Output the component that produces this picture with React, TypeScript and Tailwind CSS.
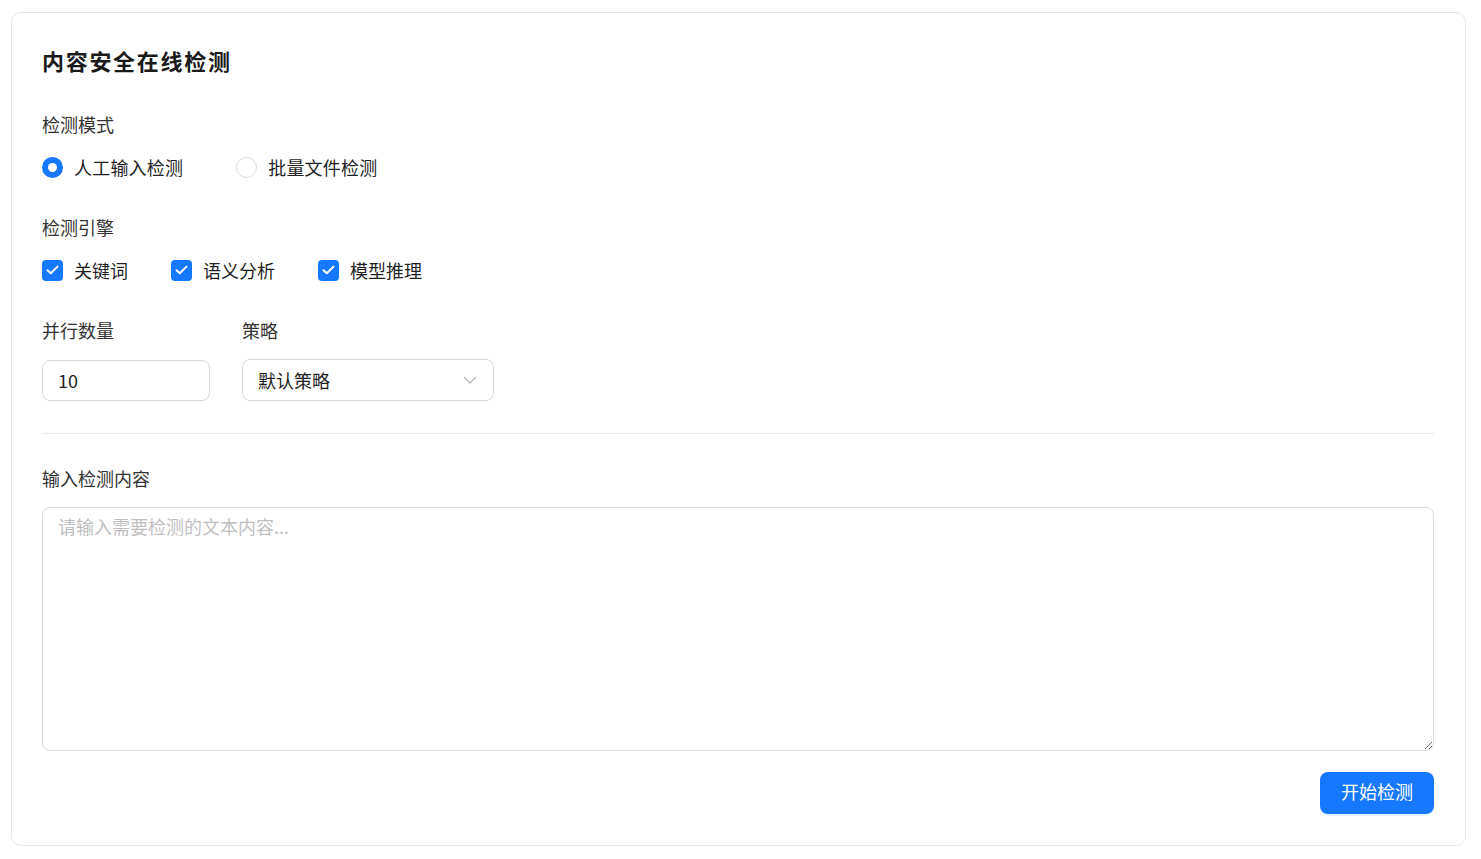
import React, { useState } from "react";

const font = { fontFamily: '"Noto Sans CJK SC", "Noto Sans", sans-serif' };

function Radio({ checked, label, onClick }: { checked: boolean; label: string; onClick: () => void }) {
  return (
    <button type="button" onClick={onClick} className="flex items-center gap-[11px] cursor-pointer">
      {checked ? (
        <span className="w-[21px] h-[21px] rounded-full bg-[#1677ff] flex items-center justify-center">
          <span className="w-[9px] h-[9px] rounded-full bg-white" />
        </span>
      ) : (
        <span className="w-[21px] h-[21px] rounded-full border border-[#d9d9d9] bg-white" />
      )}
      <span className="text-[18px] leading-[26px] text-[#1f1f1f] tracking-[0.2px]">{label}</span>
    </button>
  );
}

function Check({ label }: { label: string }) {
  return (
    <div className="flex items-center gap-[11px]">
      <span className="w-[21px] h-[21px] rounded-[4px] bg-[#1677ff] flex items-center justify-center">
        <svg width="13" height="10" viewBox="0 0 13 10" fill="none">
          <path d="M1.5 5.2 L4.8 8.3 L11.5 1.6" stroke="white" strokeWidth="2" strokeLinecap="round" strokeLinejoin="round" />
        </svg>
      </span>
      <span className="text-[18px] leading-[26px] text-[#1f1f1f]">{label}</span>
    </div>
  );
}

export default function App() {
  const [mode, setMode] = useState(0);
  return (
    <div className="bg-white min-h-[859px] pt-[12px] pl-[11px] pr-[15px] pb-[13px]" style={font}>
      <div className="border border-[#e6e6e6] rounded-[10px] bg-white pl-[30px] pr-[31px] pt-[31px] pb-[31px] h-[834px] flex flex-col">
        <h1 className="text-[22px] leading-[32px] font-bold text-[#1a1a1a] tracking-[1.7px]">内容安全在线检测</h1>

        <div className="mt-[35px] text-[18px] leading-[26px] text-[#333333]">检测模式</div>
        <div className="mt-[17px] flex items-center gap-[53px]">
          <Radio checked={mode === 0} label="人工输入检测" onClick={() => setMode(0)} />
          <Radio checked={mode === 1} label="批量文件检测" onClick={() => setMode(1)} />
        </div>

        <div className="mt-[34px] text-[18px] leading-[26px] text-[#333333]">检测引擎</div>
        <div className="mt-[17px] flex items-center gap-[43px]">
          <Check label="关键词" />
          <Check label="语义分析" />
          <Check label="模型推理" />
        </div>

        <div className="mt-[34px] flex gap-[32px]">
          <div className="flex flex-col w-[168px]">
            <div className="text-[18px] leading-[26px] text-[#333333]">并行数量</div>
            <div className="mt-[17px] h-[41px] border border-[#d9d9d9] rounded-[8px] flex items-center px-[15px] text-[18px] text-[#1f1f1f]">10</div>
          </div>
          <div className="flex flex-col w-[252px]">
            <div className="text-[18px] leading-[26px] text-[#333333]">策略</div>
            <div className="mt-[16px] h-[42px] border border-[#d9d9d9] rounded-[8px] flex items-center justify-between pl-[15px] pr-[16px] text-[18px] text-[#1f1f1f]">
              <span>默认策略</span>
              <svg width="14" height="8" viewBox="0 0 14 8" fill="none">
                <path d="M1 1 L7 7 L13 1" stroke="#b3b3b3" strokeWidth="1.2" />
              </svg>
            </div>
          </div>
        </div>

        <div className="mt-[32px] h-px bg-[#ebebeb]" />

        <div className="mt-[31px] text-[18px] leading-[26px] text-[#333333]">输入检测内容</div>
        <textarea
          className="mt-[16px] h-[244px] w-full border border-[#d9d9d9] rounded-[8px] px-[15px] pt-[5px] pb-[6px] text-[18px] leading-[26px] text-[#1f1f1f] placeholder:text-[#bfbfbf] outline-none"
          placeholder="请输入需要检测的文本内容..."
          style={font}
        />

        <div className="mt-[21px] flex justify-end">
          <button className="h-[42px] px-[21px] pb-[4px] leading-[26px] rounded-[8px] bg-[#1677ff] text-white text-[18px] shadow-[0_2px_0_rgba(5,145,255,0.1)]">开始检测</button>
        </div>
      </div>
    </div>
  );
}
